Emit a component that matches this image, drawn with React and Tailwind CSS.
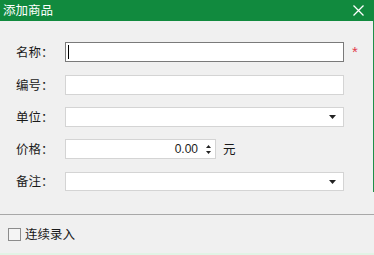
import React from "react";

const FONT = { fontFamily: '"Microsoft YaHei", "Noto Sans CJK SC", "Liberation Sans", sans-serif' };

function Arrow() {
  return (
    <svg width="7" height="4" viewBox="0 0 7 4" className="block">
      <polygon points="0,0 7,0 3.5,4" fill="#222" />
    </svg>
  );
}

function Label({ children }) {
  return (
    <div className="w-[65px] pl-[16px] text-[12.5px] leading-none text-[#1a1a1a] whitespace-nowrap">
      {children}
    </div>
  );
}

export default function App() {
  return (
    <div
      className="w-[374px] h-[255px] bg-[#f0f0f0] flex flex-col overflow-hidden"
      style={FONT}
    >
      <div className="h-[21px] bg-[#118a3e] flex items-center justify-between pl-[3px] pr-[10px] shrink-0">
        <span className="text-[12.5px] leading-none text-white">添加商品</span>
        <svg width="11" height="11" viewBox="0 0 11 11" className="block">
          <path d="M0.5 0.5 L10.5 10.5 M10.5 0.5 L0.5 10.5" stroke="#fff" strokeWidth="1.3" />
        </svg>
      </div>

      <div className="h-[171px] border-r border-[#1f8f48] flex flex-col shrink-0">
        <div className="flex items-center mt-[21px] h-[20px]">
          <Label>名称：</Label>
          <div className="w-[279px] h-[20px] bg-white border border-[#7a7a7a] flex items-center pl-[2px]">
            <div className="w-px h-[14px] bg-black" />
          </div>
          <span className="ml-[8px] text-[15px] leading-none text-[#e23a4a] mt-[-1px]" style={{ fontFamily: '"Liberation Sans", sans-serif' }}>*</span>
        </div>

        <div className="flex items-center mt-[13px] h-[20px]">
          <Label>编号：</Label>
          <div className="w-[279px] h-[20px] bg-white border border-[#d4d4d4]" />
        </div>

        <div className="flex items-center mt-[12px] h-[20px]">
          <Label>单位：</Label>
          <div className="w-[279px] h-[20px] bg-white border border-[#d4d4d4] flex items-center justify-end pr-[7px]">
            <Arrow />
          </div>
        </div>

        <div className="flex items-center mt-[12px] h-[20px]">
          <Label>价格：</Label>
          <div className="w-[151px] h-[20px] bg-white border border-[#d4d4d4] flex items-center justify-end pr-[4px]">
            <span className="text-[12px] leading-none text-[#1a1a1a]" style={{ fontFamily: '"Liberation Sans", sans-serif' }}>0.00</span>
            <div className="ml-[8px] flex flex-col items-center gap-[3px]">
              <svg width="5" height="3" viewBox="0 0 5 3" className="block">
                <polygon points="0,3 5,3 2.5,0" fill="#222" />
              </svg>
              <svg width="5" height="3" viewBox="0 0 5 3" className="block">
                <polygon points="0,0 5,0 2.5,3" fill="#222" />
              </svg>
            </div>
          </div>
          <span className="ml-[7px] text-[12.5px] leading-none text-[#1a1a1a]">元</span>
        </div>

        <div className="flex items-center mt-[13px] h-[19px]">
          <Label>备注：</Label>
          <div className="w-[279px] h-[19px] bg-white border border-[#d4d4d4] flex items-center justify-end pr-[7px]">
            <Arrow />
          </div>
        </div>
      </div>

      <div className="h-[22px] shrink-0" />
      <div className="h-px bg-[#a8a8a8] shrink-0" />

      <div className="flex items-center pl-[8px] mt-[13px] h-[13px]">
        <div className="w-[13px] h-[13px] border border-[#8c8c8c] bg-[#f4f4f4]" />
        <span className="ml-[4px] text-[12.5px] leading-none text-[#1a1a1a]">连续录入</span>
      </div>

      <div className="flex-1" />
      <div className="h-[2px] bg-[#e2f3e5] shrink-0" />
    </div>
  );
}
